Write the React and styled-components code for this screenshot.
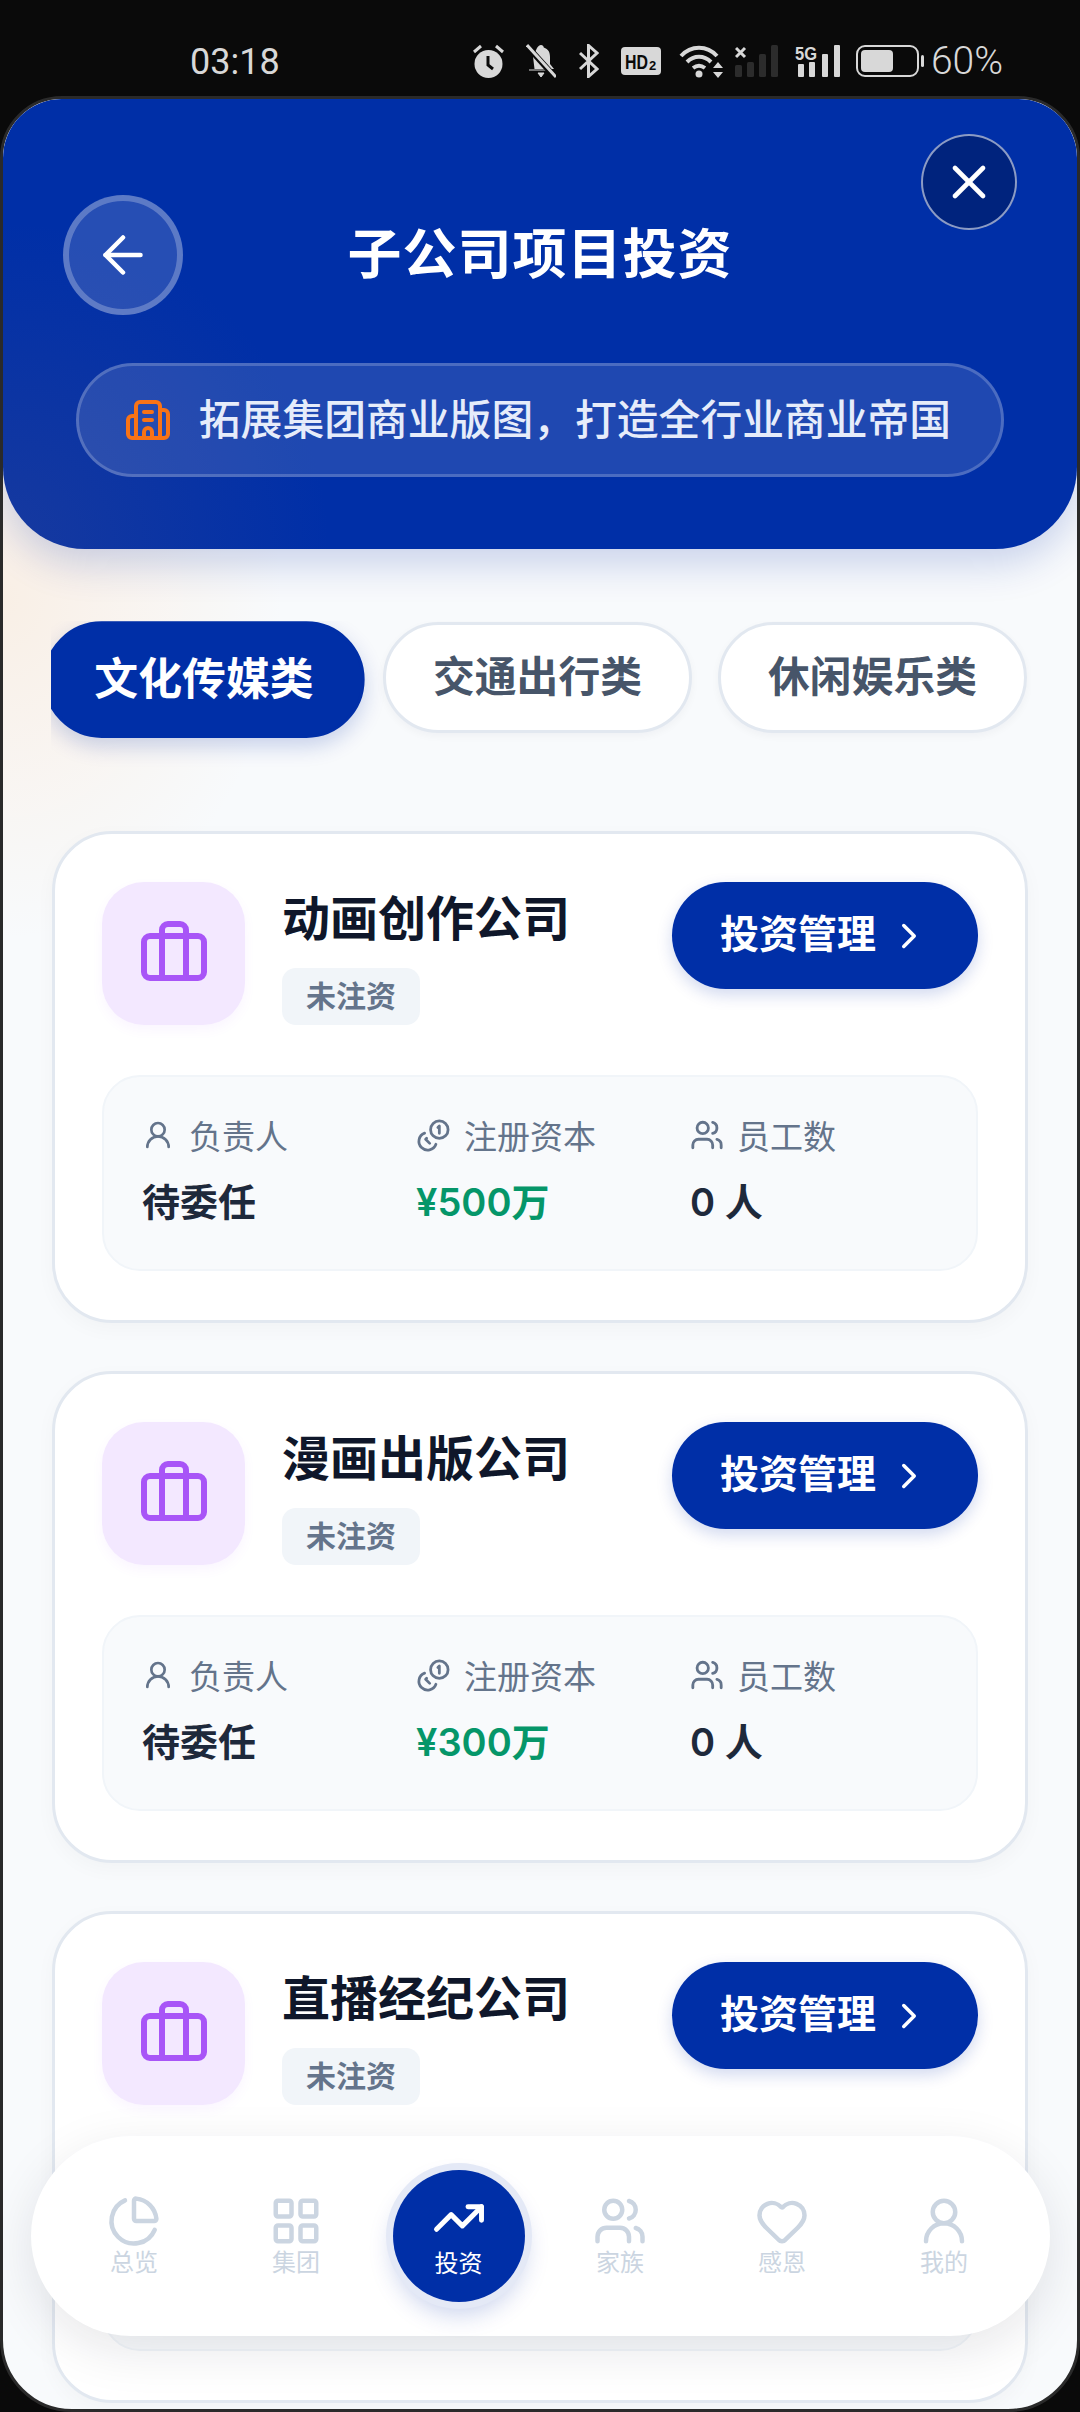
import React from 'react';
import styled, { createGlobalStyle } from 'styled-components';
import {
  ArrowLeft, X, Building2, Briefcase, ChevronRight, UserRound, Users, ChartPie, LayoutGrid, Heart, TrendingUp,
} from 'lucide-react';

const GlobalStyle = createGlobalStyle`
  html, body {
    margin: 0;
    padding: 0;
    background: #0a0a0a;
  }
  body {
    font-family: Inter, "Noto Sans CJK SC", sans-serif;
  }
  * {
    box-sizing: border-box;
  }
`;

const BLUE = '#002fa7';

const Phone = styled.div`
  width: 1080px;
  height: 2412px;
  overflow: hidden;
  background: #0a0a0a;
`;

// Status bar
const StatusBar = styled.div`
  height: 96px;
  padding: 28px 77px 0 190px;
  display: flex;
  align-items: center;
  justify-content: space-between;
  color: #d8d8d8;
  font-family: Roboto, sans-serif;
`;

const Clock = styled.span`
  font-size: 36px;
  line-height: 1;
  font-weight: 400;
`;

const StatusIcons = styled.div`
  display: flex;
  align-items: center;
  padding-bottom: 2px;
`;

const StatusIcon = styled.svg`
  display: block;
  flex: none;
  margin-left: ${(p) => p.$ml || 0}px;
`;

const Percent = styled.span`
  margin-left: 7px;
  font-size: 39px;
  line-height: 1;
  font-weight: 300;
`;

// Screen
const Screen = styled.div`
  position: relative;
  height: 2316px;
  overflow: hidden;
  border: 3px solid #2a2a2a;
  border-radius: 62px 62px 72px 72px;
  background:
    radial-gradient(ellipse 280px 340px at 0 500px, rgba(255, 196, 140, 0.2), transparent),
    #f8fafc;
`;

const Header = styled.header`
  position: relative;
  height: 450px;
  padding: 96px 60px 0;
  border-radius: 58px 58px 82px 82px;
  background:
    radial-gradient(circle at 0 100%, rgba(50, 70, 150, 0.45), transparent 28%),
    ${BLUE};
  box-shadow: 0 14px 40px rgba(0, 47, 167, 0.2);
`;

const CloseButton = styled.button`
  position: absolute;
  top: 35px;
  right: 60px;
  width: 96px;
  height: 96px;
  padding: 0;
  display: flex;
  align-items: center;
  justify-content: center;
  color: #fff;
  border: 2px solid rgba(255, 255, 255, 0.55);
  border-radius: 50%;
  background: rgba(0, 0, 0, 0.25);
`;

const HeaderRow = styled.div`
  display: grid;
  grid-template-columns: 120px 1fr 120px;
  align-items: center;
`;

const BackButton = styled.button`
  width: 120px;
  height: 120px;
  padding: 0;
  display: flex;
  align-items: center;
  justify-content: center;
  color: #fff;
  border: 6px solid rgba(255, 255, 255, 0.25);
  border-radius: 50%;
  background: rgba(255, 255, 255, 0.15);
`;

const Title = styled.h1`
  margin: 0;
  text-align: center;
  color: #fff;
  font-size: 54px;
  line-height: 80px;
  font-weight: 700;
  letter-spacing: 1px;
`;

const Slogan = styled.div`
  height: 114px;
  margin: 48px 13px 0;
  padding: 0 5px 6px 0;
  display: flex;
  align-items: center;
  justify-content: center;
  gap: 27px;
  border: 3px solid rgba(255, 255, 255, 0.2);
  border-radius: 57px;
  background: rgba(255, 255, 255, 0.12);
  color: #e6ecfa;
  font-size: 41.8px;
  font-weight: 500;
  white-space: nowrap;
`;

const SloganIcon = styled(Building2)`
  margin-top: 6px;
  flex: none;
`;

const Content = styled.main`
  padding: 0 49px;
`;

// Category tabs
const Tabs = styled.div`
  width: 980px;
  margin: 72px 0 58px -1px;
  padding: 1px 0 40px;
  display: flex;
  gap: 26px;
  overflow: hidden;
`;

const Tab = styled.div`
  flex: none;
  width: ${(p) => (p.$active ? 306 : 309)}px;
  height: 111px;
  padding-bottom: 8px;
  display: flex;
  align-items: center;
  justify-content: center;
  border: 3px solid ${(p) => (p.$active ? BLUE : '#e2e8f0')};
  border-radius: 56px;
  background: ${(p) => (p.$active ? BLUE : '#fff')};
  color: ${(p) => (p.$active ? '#fff' : '#475569')};
  font-size: 41.8px;
  font-weight: 700;
  transform: ${(p) => (p.$active ? 'scale(1.05) translateY(2px)' : 'none')};
  box-shadow: ${(p) => (p.$active ? '0 8px 20px rgba(0, 47, 167, 0.2)' : '0 3px 8px rgba(15, 23, 42, 0.04)')};
`;

// Company cards
const CardList = styled.div`
  display: flex;
  flex-direction: column;
  gap: 48px;
`;

const Card = styled.section`
  flex: none;
  padding: 48px 47px 49px;
  border: 3px solid #e2e8f0;
  border-radius: 60px;
  background: #fff;
  box-shadow: 0 6px 20px rgba(15, 23, 42, 0.03);
`;

const CardHead = styled.div`
  display: flex;
  align-items: flex-start;
`;

const CompanyIcon = styled.div`
  flex: none;
  width: 143px;
  height: 143px;
  display: flex;
  align-items: center;
  justify-content: center;
  border-radius: 42px;
  background: #f3e8ff;
  color: #a855f7;
  box-shadow: 0 5px 12px rgba(168, 85, 247, 0.06);
`;

const CompanyInfo = styled.div`
  flex: 1;
  margin-left: 37px;
`;

const CompanyName = styled.h2`
  margin: 0;
  color: #0f172a;
  font-size: 48px;
  line-height: 74px;
  font-weight: 700;
`;

const Badge = styled.span`
  display: inline-flex;
  align-items: center;
  height: 57px;
  margin-top: 12px;
  padding: 0 24px 5px;
  border-radius: 14px;
  background: #f1f5f9;
  color: #64748b;
  font-size: 30px;
  font-weight: 600;
`;

const ManageButton = styled.button`
  flex: none;
  width: 306px;
  height: 107px;
  padding: 0 0 10px;
  display: flex;
  align-items: center;
  justify-content: center;
  gap: 12px;
  border: 0;
  border-radius: 54px;
  background: ${BLUE};
  color: #fff;
  font-family: inherit;
  font-size: 39px;
  font-weight: 700;
  box-shadow: 0 6px 16px rgba(0, 47, 167, 0.18);
`;

const ManageChevron = styled(ChevronRight)`
  margin-top: 10px;
`;

const InfoPanel = styled.div`
  height: 196px;
  margin-top: 50px;
  padding: 36px 38px 0;
  display: grid;
  grid-template-columns: repeat(3, 247px);
  gap: 27px;
  border: 2px solid #f1f5f9;
  border-radius: 38px;
  background: #f8fafc;
`;

const InfoLabel = styled.div`
  height: 44px;
  display: flex;
  align-items: center;
  gap: ${(p) => p.$gap || 15}px;
  color: #64748b;
  font-size: 33px;
  white-space: nowrap;
`;

const InfoValue = styled.div`
  margin-top: 17px;
  color: ${(p) => p.$color || '#1e293b'};
  font-size: 38px;
  line-height: 56px;
  font-weight: 600;
  white-space: nowrap;
`;

// Bottom nav
const BottomNav = styled.nav`
  position: absolute;
  left: 28px;
  bottom: 73px;
  width: 1019px;
  height: 200px;
  padding: 0 22px;
  display: flex;
  align-items: center;
  border-radius: 100px;
  background: #fff;
  box-shadow: 0 14px 50px rgba(15, 23, 42, 0.1);
`;

const NavItem = styled.div`
  flex: none;
  width: 162px;
  display: flex;
  flex-direction: column;
  align-items: center;
  color: #cbd5e1;
  font-size: 24px;
  line-height: 30px;
`;

const NavDisc = styled.div`
  width: 132px;
  height: 132px;
  margin-left: 1px;
  padding-bottom: 2px;
  display: flex;
  flex-direction: column;
  align-items: center;
  justify-content: center;
  gap: 4px;
  border-radius: 50%;
  background: ${BLUE};
  color: #fff;
  font-size: 24px;
  line-height: 30px;
  box-shadow: 0 0 0 7px #e4e9f6, 0 12px 24px rgba(0, 47, 167, 0.22);
`;

const GREY = '#d8d8d8';

const AlarmIcon = () => (
  <StatusIcon width="31" height="34" viewBox="0 0 31 34">
    <circle cx="15.5" cy="20" r="14" fill={GREY} />
    <path d="M15 12v9l5 4" fill="none" stroke="#0a0a0a" strokeWidth="3" />
    <path d="M1 8l7-6M30 8l-7-6" stroke={GREY} strokeWidth="3" />
  </StatusIcon>
);

const BellOffIcon = () => (
  <StatusIcon $ml={22} width="30" height="34" viewBox="0 0 30 34">
    <path d="M15 1c1.6 0 2.6 1 2.8 2.6C22.4 5 24 8.6 24 13v7l4 5H8.500L7 12.500 11 4c.8-1.200 2.400-3 4-3z" fill={GREY} />
    <path d="M3 26h20M12 29h6l-3 4z" fill={GREY} stroke={GREY} strokeWidth="1" />
    <path d="M1 2l28 31" stroke="#0a0a0a" strokeWidth="6" />
    <path d="M1 1l29 32" stroke={GREY} strokeWidth="3" />
  </StatusIcon>
);

const BluetoothIcon = () => (
  <StatusIcon $ml={23} width="20" height="34" viewBox="0 0 20 34">
    <path d="M1 9l17 16-8.500 7.500V1.500L18 9 1 25" fill="none" stroke={GREY} strokeWidth="3" />
  </StatusIcon>
);

const HdIcon = () => (
  <StatusIcon $ml={22} width="40" height="28" viewBox="0 0 40 28">
    <rect width="40" height="28" rx="4" fill={GREY} />
    <text x="4" y="22" fill="#0a0a0a" fontFamily="Liberation Sans" fontSize="21" fontWeight="700" textLength="23" lengthAdjust="spacingAndGlyphs">HD</text>
    <text x="28" y="23" fill="#0a0a0a" fontFamily="Liberation Sans" fontSize="13" fontWeight="700">2</text>
  </StatusIcon>
);

const WifiIcon = () => (
  <StatusIcon $ml={18} width="44" height="34" viewBox="0 0 44 34">
    <path d="M2 12C12 1 28 1 38 12M8 18c7-7 17-7 24 0M14 24c4-3 8-3 12 0" fill="none" stroke={GREY} strokeWidth="4" />
    <circle cx="20" cy="30" r="3.500" fill={GREY} />
    <path d="M39 18l5 6H34zM39 34l5-6H34z" fill={GREY} />
  </StatusIcon>
);

const SimOneIcon = () => (
  <StatusIcon $ml={12} width="43" height="32" viewBox="0 0 43 32">
    <path d="M1 3l9 9M10 3l-9 9" stroke={GREY} strokeWidth="3" />
    <rect x="0" y="20" width="7" height="12" rx="1.500" fill="#2c2c2c" />
    <rect x="12" y="17" width="7" height="15" rx="1.500" fill="#2c2c2c" />
    <rect x="24" y="9" width="7" height="23" rx="1.500" fill="#2c2c2c" />
    <rect x="36" y="0" width="7" height="32" rx="1.500" fill="#2c2c2c" />
  </StatusIcon>
);

const FiveGIcon = () => (
  <StatusIcon $ml={17} width="45" height="32" viewBox="0 0 45 32">
    <text x="0" y="15" fill={GREY} fontFamily="Liberation Sans" fontSize="18" fontWeight="700" textLength="22" lengthAdjust="spacingAndGlyphs">5G</text>
    <rect x="3" y="19" width="6" height="13" rx="1" fill={GREY} />
    <rect x="14" y="17" width="6" height="15" rx="1" fill={GREY} />
    <rect x="27" y="9" width="6" height="23" rx="1" fill={GREY} />
    <rect x="39" y="0" width="6" height="32" rx="1" fill={GREY} />
  </StatusIcon>
);

const BatteryIcon = () => (
  <StatusIcon $ml={16} width="68" height="32" viewBox="0 0 68 32">
    <rect x="1" y="1" width="61" height="30" rx="8" fill="none" stroke={GREY} strokeWidth="2" />
    <rect x="5" y="5" width="32" height="22" rx="4" fill={GREY} />
    <rect x="65" y="10" width="3" height="12" rx="1.500" fill={GREY} />
  </StatusIcon>
);

// Mirrored coins with the "1" on the front coin
const CoinsIcon = () => (
  <svg width="35" height="35" viewBox="0 0 24 24" fill="none" stroke="currentColor" strokeWidth="1.9" strokeLinecap="round" strokeLinejoin="round">
    <circle cx="16" cy="8" r="6" />
    <path d="M5.910 10.370A6 6 0 1 0 13.660 18" />
    <path d="M15 6.500l1-1v5" />
    <path d="M7.290 13.880l-.7.710 2.820 2.820" />
  </svg>
);

const companies = [
  { name: '动画创作公司', capital: '¥500万' },
  { name: '漫画出版公司', capital: '¥300万' },
  { name: '直播经纪公司', capital: '¥200万' },
];

const tabs = ['文化传媒类', '交通出行类', '休闲娱乐类'];

const navLeft = [
  { label: '总览', Icon: ChartPie },
  { label: '集团', Icon: LayoutGrid },
];

const navRight = [
  { label: '家族', Icon: Users },
  { label: '感恩', Icon: Heart },
  { label: '我的', Icon: UserRound },
];

const CompanyCard = ({ name, capital }) => (
  <Card>
    <CardHead>
      <CompanyIcon>
        <Briefcase size={72} />
      </CompanyIcon>
      <CompanyInfo>
        <CompanyName>{name}</CompanyName>
        <Badge>未注资</Badge>
      </CompanyInfo>
      <ManageButton>
        投资管理
        <ManageChevron size={42} />
      </ManageButton>
    </CardHead>
    <InfoPanel>
      <div>
        <InfoLabel>
          <UserRound size={32} />
          负责人
        </InfoLabel>
        <InfoValue>待委任</InfoValue>
      </div>
      <div>
        <InfoLabel $gap={13}>
          <CoinsIcon />
          注册资本
        </InfoLabel>
        <InfoValue $color="#059669">{capital}</InfoValue>
      </div>
      <div>
        <InfoLabel $gap={13}>
          <Users size={34} />
          员工数
        </InfoLabel>
        <InfoValue>0 人</InfoValue>
      </div>
    </InfoPanel>
  </Card>
);

const App = () => (
  <Phone>
    <GlobalStyle />
    <StatusBar>
      <Clock>03:18</Clock>
      <StatusIcons>
        <AlarmIcon />
        <BellOffIcon />
        <BluetoothIcon />
        <HdIcon />
        <WifiIcon />
        <SimOneIcon />
        <FiveGIcon />
        <BatteryIcon />
        <Percent>60%</Percent>
      </StatusIcons>
    </StatusBar>
    <Screen>
      <Header>
        <CloseButton>
          <X size={56} />
        </CloseButton>
        <HeaderRow>
          <BackButton>
            <ArrowLeft size={60} strokeWidth={1.8} />
          </BackButton>
          <Title>子公司项目投资</Title>
          <span />
        </HeaderRow>
        <Slogan>
          <SloganIcon size={48} color="#f97316" />
          拓展集团商业版图，打造全行业商业帝国
        </Slogan>
      </Header>
      <Content>
        <Tabs>
          {tabs.map((tab, i) => (
            <Tab key={tab} $active={i === 0}>{tab}</Tab>
          ))}
        </Tabs>
        <CardList>
          {companies.map((company) => (
            <CompanyCard key={company.name} name={company.name} capital={company.capital} />
          ))}
        </CardList>
      </Content>
      <BottomNav>
        {navLeft.map(({ label, Icon }) => (
          <NavItem key={label}>
            <Icon size={54} />
            {label}
          </NavItem>
        ))}
        <NavItem>
          <NavDisc>
            <TrendingUp size={54} strokeWidth={2.2} />
            投资
          </NavDisc>
        </NavItem>
        {navRight.map(({ label, Icon }) => (
          <NavItem key={label}>
            <Icon size={54} />
            {label}
          </NavItem>
        ))}
      </BottomNav>
    </Screen>
  </Phone>
);

export default App;
